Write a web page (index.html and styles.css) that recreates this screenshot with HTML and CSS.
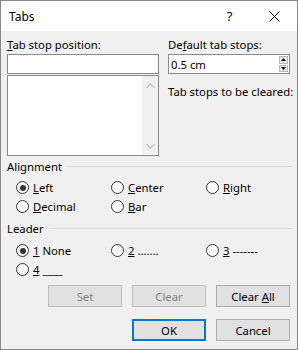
FILE: index.html
```html
<!DOCTYPE html>
<html>
<head>
<meta charset="utf-8">
<link rel="stylesheet" href="styles.css">
</head>
<body>
<div class="dialog">
  <div class="titlebar">
    <span class="title">Tabs</span>
    <span class="help">?</span>
    <span class="close"><svg width="11" height="11" viewBox="0 0 11 11"><path d="M0.5 0.5 L10.5 10.5 M10.5 0.5 L0.5 10.5" stroke="#000" stroke-width="1" fill="none"/></svg></span>
  </div>
  <div class="content">
    <div class="top">
      <div class="col-left">
        <div class="lbl"><u>T</u>ab stop position:</div>
        <div class="textbox"></div>
        <div class="listbox">
          <div class="list-area"></div>
          <div class="vscroll">
            <svg width="9" height="6" viewBox="0 0 9 6"><path d="M0.5 5 L4.5 1 L8.5 5" stroke="#c2c2c2" stroke-width="1.3" fill="none"/></svg>
            <svg width="9" height="6" viewBox="0 0 9 6"><path d="M0.5 1 L4.5 5 L8.5 1" stroke="#c2c2c2" stroke-width="1.3" fill="none"/></svg>
          </div>
        </div>
      </div>
      <div class="col-right">
        <div class="lbl">De<u>f</u>ault tab stops:</div>
        <div class="spinbox">
          <span class="spin-val">0.5 cm</span>
          <div class="spin-btns">
            <span class="spin-btn"><svg width="5" height="3" viewBox="0 0 5 3"><path d="M0 3 L2.5 0 L5 3 Z" fill="#000"/></svg></span>
            <span class="spin-btn"><svg width="5" height="3" viewBox="0 0 5 3"><path d="M0 0 L2.5 3 L5 0 Z" fill="#000"/></svg></span>
          </div>
        </div>
        <div class="lbl clear-lbl">Tab stops to be cleared:</div>
      </div>
    </div>

    <div class="group-head group-align"><span>Alignment</span><span class="rule"></span></div>
    <div class="radios">
      <div class="radio"><span class="circle checked"></span><span><u>L</u>eft</span></div>
      <div class="radio"><span class="circle"></span><span><u>C</u>enter</span></div>
      <div class="radio"><span class="circle"></span><span><u>R</u>ight</span></div>
      <div class="radio"><span class="circle"></span><span><u>D</u>ecimal</span></div>
      <div class="radio"><span class="circle"></span><span><u>B</u>ar</span></div>
    </div>

    <div class="group-head group-leader"><span>Leader</span><span class="rule"></span></div>
    <div class="radios radios-leader">
      <div class="radio"><span class="circle checked"></span><span><u>1</u> None</span></div>
      <div class="radio"><span class="circle"></span><span><u>2</u> .......</span></div>
      <div class="radio"><span class="circle"></span><span><u>3</u> -------</span></div>
      <div class="radio"><span class="circle"></span><span><u>4</u> ____</span></div>
    </div>

    <div class="btn-row row1">
      <button class="btn disabled">Set</button>
      <button class="btn disabled">Clear</button>
      <button class="btn">Clear <u>A</u>ll</button>
    </div>
    <div class="btn-row row2">
      <button class="btn default">OK</button>
      <button class="btn">Cancel</button>
    </div>
  </div>
</div>
</body>
</html>
```
FILE: styles.css
```css
html, body {
  margin: 0;
  padding: 0;
  background: #f0f0f0;
}
.dialog {
  box-sizing: border-box;
  width: 298px;
  height: 350px;
  border: 1px solid #888888;
  background: #f0f0f0;
  font-family: "Noto Sans", sans-serif;
  font-size: 11.3px;
  color: #000;
  display: flex;
  flex-direction: column;
}
.titlebar {
  height: 30px;
  background: #ffffff;
  display: flex;
  align-items: center;
}
.title {
  flex: 1;
  padding-left: 8px;
  font-size: 12px;
}
.help {
  width: 45px;
  text-align: center;
  font-size: 13px;
}
.close {
  width: 45px;
  display: flex;
  justify-content: center;
  align-items: center;
}
.content {
  padding: 6px 7px 0 6px;
  display: flex;
  flex-direction: column;
}
.top {
  display: flex;
  gap: 9px;
}
.col-left {
  width: 152px;
  display: flex;
  flex-direction: column;
}
.col-right {
  width: 122px;
  display: flex;
  flex-direction: column;
}
.lbl {
  height: 16px;
  line-height: 16px;
  white-space: nowrap;
}
.textbox {
  box-sizing: border-box;
  margin-top: 1px;
  height: 20px;
  background: #fff;
  border: 1px solid #8a8a8a;
}
.listbox {
  box-sizing: border-box;
  margin-top: 1px;
  height: 81px;
  background: #fff;
  border: 1px solid #8a8a8a;
  display: flex;
}
.list-area {
  flex: 1;
}
.vscroll {
  width: 16px;
  background: #f0f0f0;
  display: flex;
  flex-direction: column;
  justify-content: space-between;
  align-items: center;
  padding: 7px 0 6px;
}
.spinbox {
  box-sizing: border-box;
  margin-top: 1px;
  height: 20px;
  background: #fff;
  border: 1px solid #8a8a8a;
  display: flex;
  align-items: center;
}
.spin-val {
  flex: 1;
  padding-left: 2px;
}
.spin-btns {
  align-self: stretch;
  width: 9px;
  display: flex;
  flex-direction: column;
  padding: 1px 1px 1px 0;
  gap: 1px;
}
.spin-btn {
  flex: 1;
  background: #e8e8e8;
  border: 1px solid #b8b8b8;
  display: flex;
  align-items: center;
  justify-content: center;
}
.clear-lbl {
  margin-top: 10px;
}
.group-head {
  height: 16px;
  line-height: 16px;
  display: flex;
  align-items: center;
}
.group-align {
  margin-top: 3px;
}
.group-leader {
  margin-top: 5px;
}
.rule {
  flex: 1;
  height: 1px;
  background: #dcdcdc;
  margin-left: 5px;
  margin-right: -2px;
  margin-top: -1px;
}
.radios {
  display: grid;
  grid-template-columns: 95px 95px 95px;
  grid-auto-rows: 19px;
  padding-left: 9px;
  margin-top: 3px;
}
.radios-leader {
  margin-top: 4px;
}
.radio {
  display: flex;
  align-items: center;
  gap: 4px;
  white-space: nowrap;
}
.circle {
  box-sizing: border-box;
  width: 13px;
  height: 13px;
  border-radius: 50%;
  border: 1px solid #333333;
  background: #fff;
  display: flex;
  align-items: center;
  justify-content: center;
}
.circle.checked::after {
  content: "";
  width: 6px;
  height: 6px;
  border-radius: 50%;
  background: #333333;
}
.btn-row {
  display: flex;
  justify-content: flex-end;
  gap: 10px;
}
.row1 {
  margin-top: 6px;
}
.row2 {
  margin-top: 12px;
}
.btn {
  box-sizing: border-box;
  width: 74px;
  height: 22px;
  margin: 0;
  padding: 0;
  background: #e1e1e1;
  border: 1px solid #adadad;
  font-family: "Noto Sans", sans-serif;
  font-size: 11.3px;
  color: #000;
}
.btn.disabled {
  border-color: #bfbfbf;
  color: #838383;
}
.btn.default {
  border: 2px solid #0078d7;
}
u {
  text-underline-offset: 1px;
}
```
